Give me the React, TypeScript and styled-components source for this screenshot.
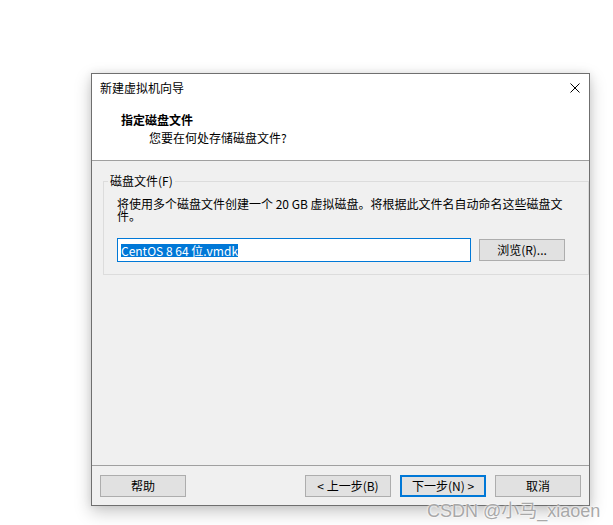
import React from "react";
import styled, { createGlobalStyle } from "styled-components";

const GlobalStyle = createGlobalStyle`
  * {
    box-sizing: border-box;
  }
  body {
    margin: 0;
    background: #ffffff;
    font-family: "Noto Sans CJK SC", "Noto Sans", sans-serif;
    font-size: 12px;
    color: #000000;
  }
`;

const Stage = styled.div`
  position: relative;
  width: 613px;
  height: 525px;
  padding: 73px 0 0 91px;
  overflow: hidden;
`;

const Dialog = styled.div`
  width: 499px;
  height: 433px;
  border: 1px solid #6f6f6f;
  background: #f0f0f0;
  display: flex;
  flex-direction: column;
  box-shadow: 0 6px 16px rgba(0, 0, 0, 0.22), 0 0 8px rgba(0, 0, 0, 0.08);
`;

const TitleBar = styled.div`
  height: 30px;
  background: #ffffff;
  display: flex;
  align-items: center;
  justify-content: space-between;
  padding: 0 9px 2px 8px;
  line-height: 14px;
`;

const CloseIcon = () => (
  <svg width="10" height="10" viewBox="0 0 10 10">
    <path d="M0.5 0.5 L9.5 9.5 M9.5 0.5 L0.5 9.5" stroke="#000" strokeWidth="1" />
  </svg>
);

const Header = styled.div`
  height: 57px;
  background: #ffffff;
  border-bottom: 1px solid #a0a0a0;
  padding: 8px 0 0 29px;
  display: flex;
  flex-direction: column;
  gap: 2px;
  line-height: 16px;
`;

const HeaderTitle = styled.div`
  font-weight: bold;
`;

const HeaderSub = styled.div`
  padding-left: 28px;
`;

const Body = styled.div`
  flex: 1;
  padding: 13px 10px 0 11px;
`;

const Group = styled.fieldset`
  margin: 0;
  border: 1px solid #dcdcdc;
  padding: 10px 13px 12px 13px;
  height: 101px;
`;

const Legend = styled.legend`
  padding: 0 2px;
  margin-left: -9px;
  line-height: 14px;
`;

const Description = styled.div`
  width: 458px;
  line-height: 12px;
`;

const FileRow = styled.div`
  display: flex;
  align-items: center;
  gap: 8px;
  margin-top: 16px;
`;

const FileInput = styled.div`
  width: 354px;
  height: 24px;
  border: 1px solid #0078d7;
  background: #ffffff;
  padding-left: 3px;
  display: flex;
  align-items: center;
`;

const Selected = styled.span`
  background: #0078d7;
  color: #ffffff;
  line-height: 13px;
`;

const Button = styled.div<{ $default?: boolean }>`
  width: 86px;
  height: 22px;
  background: #e1e1e1;
  border: ${(p) => (p.$default ? "2px solid #0078d7" : "1px solid #adadad")};
  display: flex;
  align-items: center;
  justify-content: center;
  line-height: 14px;
`;

const Footer = styled.div`
  height: 40px;
  border-top: 1px solid #a0a0a0;
  padding: 9px 8px 0 8px;
  display: flex;
  align-items: flex-start;
  justify-content: space-between;
`;

const NavButtons = styled.div`
  display: flex;
  gap: 9px;
`;

const Watermark = styled.div`
  position: absolute;
  left: 427px;
  top: 496px;
  font-family: "Liberation Sans", Arial, "Noto Sans CJK SC", sans-serif;
  font-size: 18px;
  color: #a8a8a8;
  text-shadow: 0 0 2px #ffffff, 0 0 2px #ffffff;
  white-space: nowrap;
`;

export default function App() {
  return (
    <>
      <GlobalStyle />
      <Stage>
        <Dialog>
          <TitleBar>
            <span>新建虚拟机向导</span>
            <CloseIcon />
          </TitleBar>
          <Header>
            <HeaderTitle>指定磁盘文件</HeaderTitle>
            <HeaderSub>您要在何处存储磁盘文件?</HeaderSub>
          </Header>
          <Body>
            <Group>
              <Legend>磁盘文件(F)</Legend>
              <Description>
                将使用多个磁盘文件创建一个 20 GB 虚拟磁盘。将根据此文件名自动命名这些磁盘文件。
              </Description>
              <FileRow>
                <FileInput>
                  <Selected>CentOS 8 64 位.vmdk</Selected>
                </FileInput>
                <Button>浏览(R)...</Button>
              </FileRow>
            </Group>
          </Body>
          <Footer>
            <Button>帮助</Button>
            <NavButtons>
              <Button>&lt; 上一步(B)</Button>
              <Button $default>下一步(N) &gt;</Button>
              <Button>取消</Button>
            </NavButtons>
          </Footer>
        </Dialog>
        <Watermark>CSDN @小马_xiaoen</Watermark>
      </Stage>
    </>
  );
}
